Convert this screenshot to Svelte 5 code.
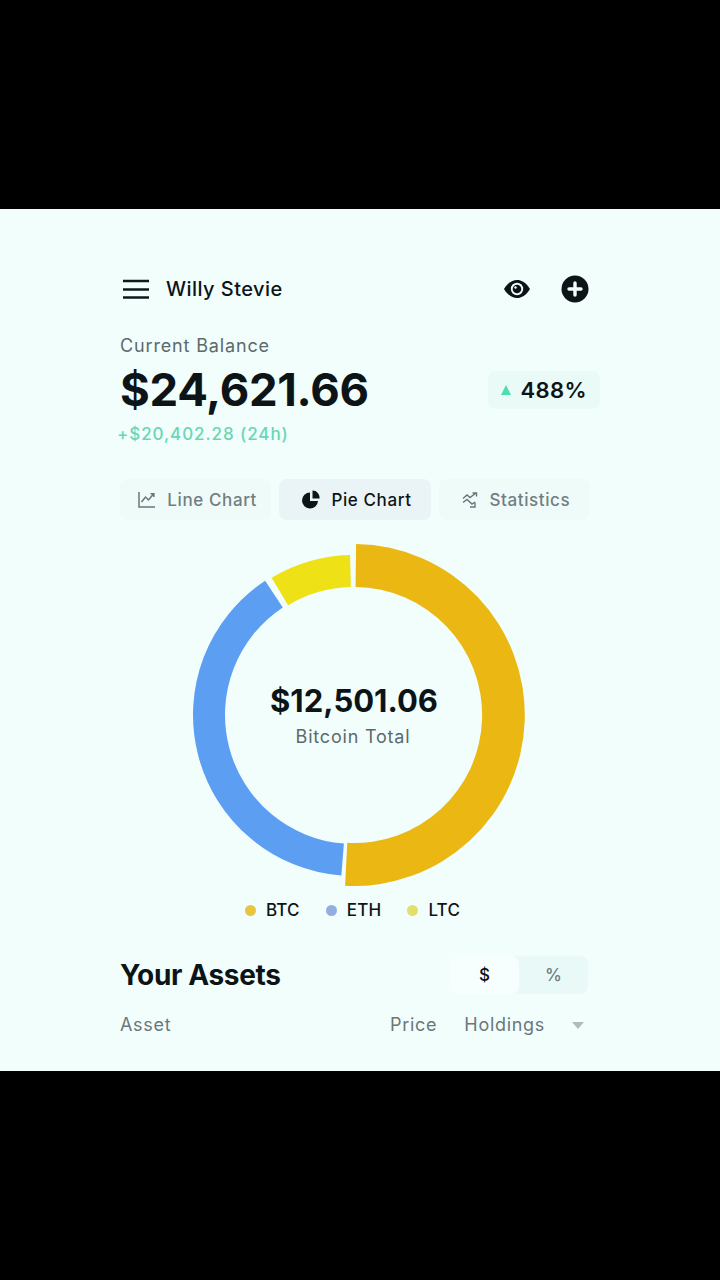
<script lang="ts">
  const CX = 180;
  const CY = 180;

  /** Ring segment, angles in degrees clockwise from 12 o'clock */
  function arc(r1: number, r2: number, a1: number, a2: number): string {
    const pt = (r: number, a: number) => {
      const t = (a * Math.PI) / 180;
      return `${(CX + r * Math.sin(t)).toFixed(2)} ${(CY - r * Math.cos(t)).toFixed(2)}`;
    };
    const large = a2 - a1 > 180 ? 1 : 0;
    return `M${pt(r2, a1)} A${r2} ${r2} 0 ${large} 1 ${pt(r2, a2)} L${pt(r1, a2)} A${r1} ${r1} 0 ${large} 0 ${pt(r1, a1)} Z`;
  }

  const segments = [
    { color: '#ebb813', d: arc(128, 171, 0.7, 183) },
    { color: '#5c9ff2', d: arc(129, 161, 184.5, 326.5) },
    { color: '#eee115', d: arc(128, 160, 329, 358.6) },
  ];

  const legend = [
    { label: 'BTC', color: '#e9c53e' },
    { label: 'ETH', color: '#93aedd' },
    { label: 'LTC', color: '#e3e06a' },
  ];
</script>

<div class="page">
  <div class="bar"></div>
  <main class="screen">
    <header class="top">
      <div class="who">
        <svg class="menu" width="28" height="20" viewBox="0 0 28 20">
          <path d="M1 2h26M1 10.500h26M1 18.500h26" stroke="#11181c" stroke-width="2.400" fill="none" />
        </svg>
        <span class="name">Willy Stevie</span>
      </div>
      <div class="actions">
        <svg width="28" height="20" viewBox="0 0 28 20">
          <path d="M1 10C5 3.500 9.500 1 14 1s9 2.500 13 9c-4 6.500-8.500 9-13 9S5 16.500 1 10Z" fill="#0d1417" />
          <circle cx="14" cy="10" r="6.200" fill="#f1fefc" />
          <circle cx="14" cy="10" r="4.300" fill="#0d1417" />
          <circle cx="12.500" cy="8.500" r="1.200" fill="#f1fefc" />
        </svg>
        <svg width="28" height="28" viewBox="0 0 28 28">
          <circle cx="14" cy="14" r="13.500" fill="#0d1417" />
          <path d="M14 8v12M8 14h12" stroke="#f1fefc" stroke-width="3.400" stroke-linecap="round" />
        </svg>
      </div>
    </header>

    <section class="balance">
      <p class="label">Current Balance</p>
      <div class="amount-row">
        <h1 class="amount">$24,621.66</h1>
        <div class="pct">
          <svg width="10" height="10" viewBox="0 0 10 10"><path d="M5 0 10 10H0Z" fill="#4fdcb2" /></svg>
          <span>488%</span>
        </div>
      </div>
      <p class="delta">+$20,402.28 (24h)</p>
    </section>

    <nav class="tabs">
      <div class="tab">
        <svg width="18" height="17" viewBox="0 0 18 17" fill="none" stroke="#69757a" stroke-width="1.500">
          <path d="M1 1v15h16" />
          <path d="M3.500 11 7.500 6l3 3 5-6M12.500 2.700h3.400v3.400" />
        </svg>
        <span>Line Chart</span>
      </div>
      <div class="tab active">
        <svg width="18" height="19" viewBox="0 0 18 19" fill="#0d1417">
          <path d="M8 2.500a8 8 0 1 0 8 8.500H8Z" />
          <path d="M10.500 0.500a7 7 0 0 1 7 8h-7Z" />
        </svg>
        <span>Pie Chart</span>
      </div>
      <div class="tab">
        <svg width="16" height="16" viewBox="0 0 16 16" fill="none" stroke="#69757a" stroke-width="1.400">
          <path d="M1 6.500 5 3l3 2.500L14 1M10.500 1H14.500V4.500" />
          <path d="M1 10.500 5 7.500l5 4.500 3-2M8 15h5v-4.500" />
        </svg>
        <span>Statistics</span>
      </div>
    </nav>

    <div class="donut">
      <svg width="360" height="360" viewBox="0 0 360 360">
        {#each segments as seg}
          <path d={seg.d} fill={seg.color} />
        {/each}
      </svg>
      <div class="center">
        <strong>$12,501.06</strong>
        <span>Bitcoin Total</span>
      </div>
    </div>

    <ul class="legend">
      {#each legend as item}
        <li><i style="background: {item.color}"></i>{item.label}</li>
      {/each}
    </ul>

    <div class="assets-head">
      <h2>Your Assets</h2>
      <div class="toggle">
        <span class="on">$</span>
        <span>%</span>
      </div>
    </div>

    <div class="columns">
      <span>Asset</span>
      <div class="right">
        <span>Price</span>
        <span>Holdings</span>
        <svg width="12" height="7" viewBox="0 0 12 7"><path d="M0 0h12L6 7Z" fill="#aebcc0" /></svg>
      </div>
    </div>
  </main>
  <div class="bar"></div>
</div>

<style>
  :global(body) {
    margin: 0;
    background: #000;
  }

  .page {
    display: flex;
    flex-direction: column;
    height: 1280px;
    font-family: Inter, 'Liberation Sans', sans-serif;
    color: #0d1417;
  }

  .bar {
    height: 209px;
    background: #000;
  }

  .screen {
    height: 862px;
    box-sizing: border-box;
    padding: 65px 131px 0 120px;
    background: #f1fefc;
    overflow: hidden;
  }

  .top {
    display: flex;
    justify-content: space-between;
    align-items: center;
    height: 30px;
  }

  .who {
    display: flex;
    align-items: center;
    gap: 16px;
    padding-left: 2px;
  }

  .menu {
    display: block;
  }

  .name {
    font-size: 20px;
    font-weight: 500;
    letter-spacing: 0.45px;
  }

  .actions {
    display: flex;
    align-items: center;
    gap: 30px;
  }

  .actions svg {
    display: block;
  }

  .balance {
    margin-top: 32px;
  }

  .label {
    margin: 0;
    font-size: 18px;
    line-height: 20px;
    letter-spacing: 0.85px;
    color: #5d696d;
  }

  .amount-row {
    display: flex;
    justify-content: space-between;
    align-items: center;
    margin-top: 9px;
    margin-right: -11px;
  }

  .amount {
    margin: 0;
    font-size: 45.500px;
    line-height: 50px;
    font-weight: 700;
    letter-spacing: -0.3px;
  }

  .pct {
    display: flex;
    align-items: center;
    gap: 9px;
    padding: 0 13px;
    height: 38px;
    border-radius: 8px;
    background: #e9faf7;
    font-size: 22px;
    font-weight: 600;
    letter-spacing: 0.4px;
  }

  .delta {
    margin: 9px 0 0 -3px;
    font-size: 17px;
    line-height: 20px;
    font-weight: 500;
    letter-spacing: 0.92px;
    color: #6ad6b5;
  }

  .tabs {
    display: flex;
    gap: 8px;
    margin-top: 35px;
    height: 41px;
    margin-right: -1px;
  }

  .tab {
    display: flex;
    align-items: center;
    justify-content: center;
    gap: 11px;
    flex: 1;
    padding-left: 4px;
    border-radius: 8px;
    background: #eefbf9;
    font-size: 17px;
    font-weight: 500;
    letter-spacing: 0.6px;
    color: #727e82;
    white-space: nowrap;
  }

  .tab.active {
    background: #eaf4f6;
    color: #0d1417;
  }

  .donut {
    position: relative;
    width: 360px;
    height: 360px;
    margin: 15px 0 0 54px;
  }

  .donut svg {
    display: block;
  }

  .center {
    position: absolute;
    inset: 0;
    display: flex;
    flex-direction: column;
    align-items: center;
    justify-content: center;
    padding-top: 2px;
    box-sizing: border-box;
  }

  .center strong {
    font-size: 31px;
    line-height: 36px;
    font-weight: 700;
  }

  .center span {
    margin-top: 6px;
    margin-left: -2px;
    font-size: 18px;
    line-height: 24px;
    color: #5d696d;
    letter-spacing: 0.8px;
  }

  .legend {
    display: flex;
    justify-content: center;
    gap: 26px;
    margin: 3px 0 0 -4px;
    padding: 0;
    list-style: none;
    font-size: 17px;
    line-height: 24px;
    font-weight: 500;
    letter-spacing: 0.2px;
  }

  .legend li {
    display: flex;
    align-items: center;
    gap: 10px;
  }

  .legend i {
    width: 11px;
    height: 11px;
    border-radius: 50%;
  }

  .assets-head {
    display: flex;
    justify-content: space-between;
    align-items: center;
    margin-top: 34px;
    padding-right: 1px;
  }

  h2 {
    margin: 0;
    font-size: 28px;
    font-weight: 700;
    letter-spacing: -0.35px;
  }

  .toggle {
    display: flex;
    width: 138px;
    height: 38px;
    border-radius: 8px;
    background: #e9f9f8;
    font-size: 17px;
    font-weight: 500;
    color: #6f7c80;
  }

  .toggle span {
    flex: 1;
    display: flex;
    align-items: center;
    justify-content: center;
    border-radius: 8px;
  }

  .toggle .on {
    background: #f6fffe;
    color: #0d1417;
  }

  .columns {
    display: flex;
    justify-content: space-between;
    align-items: center;
    margin-top: 19px;
    font-size: 18px;
    line-height: 24px;
    letter-spacing: 0.7px;
    color: #6b777b;
  }

  .right {
    display: flex;
    align-items: center;
    gap: 27px;
    padding-right: 5px;
  }
</style>
